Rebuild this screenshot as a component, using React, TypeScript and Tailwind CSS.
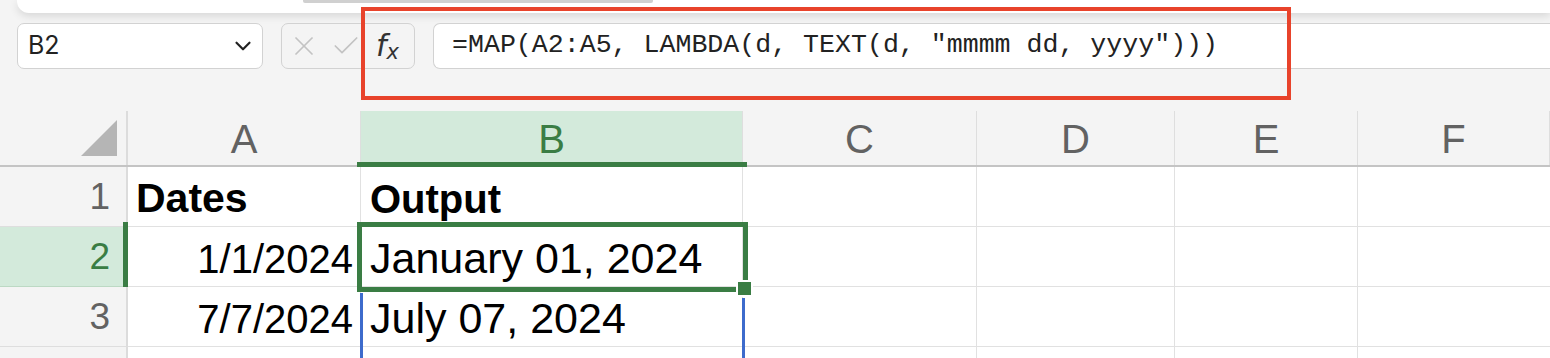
import React from 'react';
import { ChevronDown, X, Check } from 'lucide-react';

const cols = [
    { key: 'A', w: 'w-[233px]' },
    { key: 'B', w: 'w-[382px]' },
    { key: 'C', w: 'w-[234px]' },
    { key: 'D', w: 'w-[198px]' },
    { key: 'E', w: 'w-[183px]' },
    { key: 'F', w: 'w-[192px]' },
];

const rows: { n: number; a: string; b: string; bold?: boolean }[] = [
    { n: 1, a: 'Dates', b: 'Output', bold: true },
    { n: 2, a: '1/1/2024', b: 'January 01, 2024' },
    { n: 3, a: '7/7/2024', b: 'July 07, 2024' },
    { n: 4, a: '', b: '' },
];

export default function App() {
    return (
        <div className="relative w-[1550px] h-[358px] overflow-hidden bg-[#f4f4f4] font-['Liberation_Sans',Arial,sans-serif]">
            {/* Ribbon edge */}
            <div className="ml-[17px] h-[13px] rounded-bl-[12px] bg-white shadow-[0_3px_8px_rgba(0,0,0,0.12)]">
                <div className="ml-[286px] w-[350px] h-[3px] rounded-b-[2px] bg-[#d0d0d0]" />
            </div>

            {/* Formula bar */}
            <div className="flex items-stretch mt-[10px] h-[46px] pl-[17px] gap-[18px]">
                <div className="w-[246px] flex items-center justify-between pl-[10px] pr-[6px] bg-white border border-[#d2d2d2] rounded-[7px]">
                    <span className="text-[25px] text-[#222] font-['Inter',sans-serif]">B2</span>
                    <ChevronDown size={26} strokeWidth={2} className="text-[#222]" />
                </div>
                <div className="w-[134px] flex items-center pl-[6px] gap-[10px] border border-[#d2d2d2] rounded-[7px]">
                    <X size={32} strokeWidth={1.3} className="text-[#c3c3c3]" />
                    <Check size={32} strokeWidth={1.3} className="text-[#c3c3c3]" />
                    <span className="ml-[4px] text-[#333] font-['DejaVu_Sans',sans-serif] leading-none">
                        <span className="italic text-[30px]">f</span>
                        <span className="italic text-[21px] relative top-[3px]">x</span>
                    </span>
                </div>
                <div className="flex-1 flex items-center pl-[18px] bg-white border-y border-l border-[#d2d2d2] rounded-l-[7px]">
                    <span className="text-[26.6px] text-[#222] font-['Liberation_Mono',monospace] whitespace-pre">
                        =MAP(A2:A5, LAMBDA(d, TEXT(d, "mmmm dd, yyyy")))
                    </span>
                </div>
            </div>

            {/* Grid */}
            <div className="relative mt-[42px]">
                {/* Column headers */}
                <div className="flex h-[56px] border-b-[2px] border-[#c4c4c4]">
                    <div className="w-[128px] relative border-r-[2px] border-[#dcdcdc]">
                        <svg className="absolute left-[81px] top-[9px]" width="36" height="36" viewBox="0 0 36 36">
                            <polygon points="36,0 36,36 0,36" fill="#b5b5b5" />
                        </svg>
                    </div>
                    {cols.map((c) => (
                        <div
                            key={c.key}
                            className={`${c.w} relative flex items-center justify-center pt-[2px] border-r border-[#dedede] text-[40px] ${
                                c.key === 'B' ? 'bg-[#d3eadb] text-[#3a7d44]' : 'text-[#626262]'
                            }`}
                        >
                            {c.key}
                            {c.key === 'B' && (
                                <div className="absolute left-[-4px] right-[-5px] bottom-[-2px] h-[5px] bg-[#3a7d44]" />
                            )}
                        </div>
                    ))}
                </div>

                {/* Rows */}
                {rows.map((r) => (
                    <div key={r.n} className="flex h-[60px]">
                        <div
                            className={`w-[128px] relative flex items-center justify-end pr-[16px] text-[37px] border-r-[2px] border-[#dcdcdc] border-b ${
                                r.n === 2
                                    ? 'bg-[#d3eadb] text-[#3a7d44] border-b-[#bcd9c4]'
                                    : 'bg-[#f4f4f4] text-[#626262] border-b-[#dedede]'
                            }`}
                        >
                            {r.n < 4 ? r.n : ''}
                            {r.n === 2 && (
                                <div className="absolute right-[-2px] top-[-5px] bottom-[-5px] w-[5px] bg-[#3a7d44]" />
                            )}
                        </div>
                        <div
                            className={`w-[233px] flex items-center pt-[4px] bg-white border-r border-b border-[#e1e1e1] text-black ${
                                r.bold ? 'justify-start pl-[8px] font-bold text-[41px]' : 'justify-end pr-[7px] text-[40px]'
                            }`}
                        >
                            {r.a}
                        </div>
                        <div
                            className={`w-[382px] flex items-center pl-[9px] pt-[4px] bg-white border-r border-b border-[#e1e1e1] text-black ${
                                r.bold ? 'font-bold text-[40px]' : 'text-[43px]'
                            }`}
                        >
                            {r.b}
                        </div>
                        <div className="w-[234px] bg-white border-r border-b border-[#e1e1e1]" />
                        <div className="w-[198px] bg-white border-r border-b border-[#e1e1e1]" />
                        <div className="w-[183px] bg-white border-r border-b border-[#e1e1e1]" />
                        <div className="w-[192px] bg-white border-b border-[#e1e1e1]" />
                    </div>
                ))}

                {/* Active cell B2 */}
                <div className="absolute left-[357px] top-[111px] w-[391px] h-[70px] border-[5px] border-[#3a7d44]" />
                <div className="absolute left-[736px] top-[169px] w-[17px] h-[17px] bg-white p-[2px]">
                    <div className="w-full h-full bg-[#3a7d44]" />
                </div>

                {/* Spill range outline */}
                <div className="absolute left-[360px] top-[182px] w-[3px] h-[80px] bg-[#3d6bcc]" />
                <div className="absolute left-[742px] top-[187px] w-[3px] h-[80px] bg-[#3d6bcc]" />
            </div>

            {/* Annotation */}
            <div className="absolute left-[361px] top-[7px] w-[930px] h-[93px] border-[4px] border-[#e8432b]" />
        </div>
    );
}
